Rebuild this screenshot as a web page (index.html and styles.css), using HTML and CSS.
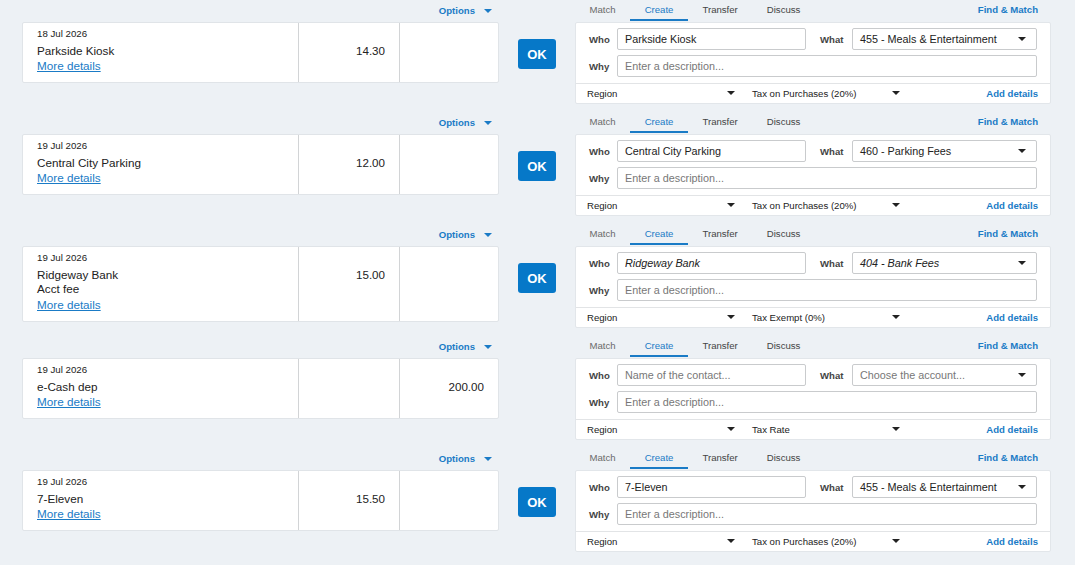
FILE: index.html
```html
<!DOCTYPE html>
<html lang="en">
<head>
    <meta charset="UTF-8">
    <meta name="viewport" content="width=device-width, initial-scale=1.0">
    <title>Bank Reconciliation</title>
    <link rel="stylesheet" href="styles.css">
</head>
<body>
    <div class="list">

        <!-- Line 1 -->
        <div class="line">
            <div class="statement">
                <div class="options">Options <span class="caret blue"></span></div>
                <div class="card">
                    <div class="cell details">
                        <div class="date">18 Jul 2026</div>
                        <div class="payee">Parkside Kiosk</div>
                        <a class="more" href="#">More details</a>
                    </div>
                    <div class="cell amount spent">14.30</div>
                    <div class="cell amount"></div>
                </div>
            </div>
            <div class="ok-col"><button class="ok">OK</button></div>
            <div class="entry">
                <div class="tabs">
                    <span class="tab muted">Match</span>
                    <span class="tab active">Create</span>
                    <span class="tab">Transfer</span>
                    <span class="tab">Discuss</span>
                    <a class="find" href="#">Find &amp; Match</a>
                </div>
                <div class="panel">
                    <div class="fields">
                        <div class="field-row">
                            <label>Who</label>
                            <input class="who" type="text" value="Parkside Kiosk" placeholder="Name of the contact...">
                            <label class="what">What</label>
                            <div class="select">455 - Meals &amp; Entertainment <span class="caret"></span></div>
                        </div>
                        <div class="field-row">
                            <label>Why</label>
                            <input class="why" type="text" placeholder="Enter a description...">
                        </div>
                    </div>
                    <div class="panel-foot">
                        <div class="mini-select">Region <span class="caret"></span></div>
                        <div class="mini-select">Tax on Purchases (20%) <span class="caret"></span></div>
                        <a class="add" href="#">Add details</a>
                    </div>
                </div>
            </div>
        </div>

        <!-- Line 2 -->
        <div class="line">
            <div class="statement">
                <div class="options">Options <span class="caret blue"></span></div>
                <div class="card">
                    <div class="cell details">
                        <div class="date">19 Jul 2026</div>
                        <div class="payee">Central City Parking</div>
                        <a class="more" href="#">More details</a>
                    </div>
                    <div class="cell amount spent">12.00</div>
                    <div class="cell amount"></div>
                </div>
            </div>
            <div class="ok-col"><button class="ok">OK</button></div>
            <div class="entry">
                <div class="tabs">
                    <span class="tab muted">Match</span>
                    <span class="tab active">Create</span>
                    <span class="tab">Transfer</span>
                    <span class="tab">Discuss</span>
                    <a class="find" href="#">Find &amp; Match</a>
                </div>
                <div class="panel">
                    <div class="fields">
                        <div class="field-row">
                            <label>Who</label>
                            <input class="who" type="text" value="Central City Parking" placeholder="Name of the contact...">
                            <label class="what">What</label>
                            <div class="select">460 - Parking Fees <span class="caret"></span></div>
                        </div>
                        <div class="field-row">
                            <label>Why</label>
                            <input class="why" type="text" placeholder="Enter a description...">
                        </div>
                    </div>
                    <div class="panel-foot">
                        <div class="mini-select">Region <span class="caret"></span></div>
                        <div class="mini-select">Tax on Purchases (20%) <span class="caret"></span></div>
                        <a class="add" href="#">Add details</a>
                    </div>
                </div>
            </div>
        </div>

        <!-- Line 3: suggested values shown in italics -->
        <div class="line">
            <div class="statement">
                <div class="options">Options <span class="caret blue"></span></div>
                <div class="card">
                    <div class="cell details">
                        <div class="date">19 Jul 2026</div>
                        <div class="payee">Ridgeway Bank</div>
                        <div class="payee">Acct fee</div>
                        <a class="more" href="#">More details</a>
                    </div>
                    <div class="cell amount spent">15.00</div>
                    <div class="cell amount"></div>
                </div>
            </div>
            <div class="ok-col"><button class="ok">OK</button></div>
            <div class="entry">
                <div class="tabs">
                    <span class="tab muted">Match</span>
                    <span class="tab active">Create</span>
                    <span class="tab">Transfer</span>
                    <span class="tab">Discuss</span>
                    <a class="find" href="#">Find &amp; Match</a>
                </div>
                <div class="panel">
                    <div class="fields">
                        <div class="field-row">
                            <label>Who</label>
                            <input class="who suggested" type="text" value="Ridgeway Bank" placeholder="Name of the contact...">
                            <label class="what">What</label>
                            <div class="select suggested">404 - Bank Fees <span class="caret"></span></div>
                        </div>
                        <div class="field-row">
                            <label>Why</label>
                            <input class="why" type="text" placeholder="Enter a description...">
                        </div>
                    </div>
                    <div class="panel-foot">
                        <div class="mini-select">Region <span class="caret"></span></div>
                        <div class="mini-select">Tax Exempt (0%) <span class="caret"></span></div>
                        <a class="add" href="#">Add details</a>
                    </div>
                </div>
            </div>
        </div>

        <!-- Line 4: nothing coded yet, no OK button -->
        <div class="line">
            <div class="statement">
                <div class="options">Options <span class="caret blue"></span></div>
                <div class="card">
                    <div class="cell details">
                        <div class="date">19 Jul 2026</div>
                        <div class="payee">e-Cash dep</div>
                        <a class="more" href="#">More details</a>
                    </div>
                    <div class="cell amount spent"></div>
                    <div class="cell amount">200.00</div>
                </div>
            </div>
            <div class="ok-col"></div>
            <div class="entry">
                <div class="tabs">
                    <span class="tab muted">Match</span>
                    <span class="tab active">Create</span>
                    <span class="tab">Transfer</span>
                    <span class="tab">Discuss</span>
                    <a class="find" href="#">Find &amp; Match</a>
                </div>
                <div class="panel">
                    <div class="fields">
                        <div class="field-row">
                            <label>Who</label>
                            <input class="who" type="text" placeholder="Name of the contact...">
                            <label class="what">What</label>
                            <div class="select empty">Choose the account... <span class="caret"></span></div>
                        </div>
                        <div class="field-row">
                            <label>Why</label>
                            <input class="why" type="text" placeholder="Enter a description...">
                        </div>
                    </div>
                    <div class="panel-foot">
                        <div class="mini-select">Region <span class="caret"></span></div>
                        <div class="mini-select">Tax Rate <span class="caret"></span></div>
                        <a class="add" href="#">Add details</a>
                    </div>
                </div>
            </div>
        </div>

        <!-- Line 5 -->
        <div class="line">
            <div class="statement">
                <div class="options">Options <span class="caret blue"></span></div>
                <div class="card">
                    <div class="cell details">
                        <div class="date">19 Jul 2026</div>
                        <div class="payee">7-Eleven</div>
                        <a class="more" href="#">More details</a>
                    </div>
                    <div class="cell amount spent">15.50</div>
                    <div class="cell amount"></div>
                </div>
            </div>
            <div class="ok-col"><button class="ok">OK</button></div>
            <div class="entry">
                <div class="tabs">
                    <span class="tab muted">Match</span>
                    <span class="tab active">Create</span>
                    <span class="tab">Transfer</span>
                    <span class="tab">Discuss</span>
                    <a class="find" href="#">Find &amp; Match</a>
                </div>
                <div class="panel">
                    <div class="fields">
                        <div class="field-row">
                            <label>Who</label>
                            <input class="who" type="text" value="7-Eleven" placeholder="Name of the contact...">
                            <label class="what">What</label>
                            <div class="select">455 - Meals &amp; Entertainment <span class="caret"></span></div>
                        </div>
                        <div class="field-row">
                            <label>Why</label>
                            <input class="why" type="text" placeholder="Enter a description...">
                        </div>
                    </div>
                    <div class="panel-foot">
                        <div class="mini-select">Region <span class="caret"></span></div>
                        <div class="mini-select">Tax on Purchases (20%) <span class="caret"></span></div>
                        <a class="add" href="#">Add details</a>
                    </div>
                </div>
            </div>
        </div>

    </div>
</body>
</html>
```

FILE: styles.css
```css
* {
    margin: 0;
    padding: 0;
    box-sizing: border-box;
}

body {
    background-color: #edf1f5;
    color: #222;
    font-family: "Liberation Sans", Arial, sans-serif;
}

a {
    color: #1a7bc6;
}

.list {
    padding: 0 24px 0 22px;
}

.line {
    display: flex;
    align-items: flex-start;
    margin-bottom: 8px;
}

/* statement side */
.statement {
    width: 477px;
}

.options {
    height: 21px;
    margin-bottom: 1px;
    display: flex;
    justify-content: flex-end;
    align-items: center;
    gap: 9px;
    padding-right: 7px;
    font-size: 9.6px;
    font-weight: bold;
    color: #1a7bc6;
}

.card {
    display: flex;
    background: white;
    border: 1px solid #e0e4e8;
    border-radius: 2px;
}

.cell {
    border-right: 1px solid #d2d4d6;
}

.details {
    width: 276px;
    padding: 3px 0 8px 14px;
}

.date {
    font-size: 9.7px;
    line-height: 16px;
    margin-bottom: 1.5px;
}

.payee {
    font-size: 11.7px;
    line-height: 14.5px;
}

.more {
    display: block;
    font-size: 11.7px;
    line-height: 16px;
}

.amount {
    width: 98px;
    padding: 20px 14px 0 0;
    text-align: right;
    font-size: 11.6px;
    line-height: 16px;
    border-right: none;
}

.amount.spent {
    width: 101px;
    border-right: 1px solid #d2d4d6;
}

/* ok button */
.ok-col {
    width: 76px;
    display: flex;
    justify-content: center;
    padding-top: 39px;
}

.ok {
    width: 38px;
    height: 30px;
    background-color: #0678c8;
    color: white;
    border: none;
    border-radius: 3px;
    font-family: inherit;
    font-size: 13px;
    font-weight: bold;
    cursor: pointer;
}

/* transaction side */
.entry {
    width: 476px;
}

.tabs {
    height: 21px;
    margin-bottom: 1px;
    display: flex;
    align-items: flex-start;
    font-size: 9.6px;
}

.tab {
    padding: 0 14.5px;
    line-height: 19px;
    border-bottom: 2px solid transparent;
    color: #444;
}

.tab.muted {
    color: #6a6a6a;
}

.tab.active {
    color: #1a7bc6;
    border-bottom-color: #1a7bc6;
}

.find {
    margin-left: auto;
    padding-right: 13px;
    line-height: 19px;
    font-weight: bold;
    text-decoration: none;
}

.panel {
    height: 82px;
    background: white;
    border: 1px solid #e2e6ea;
    border-radius: 2px;
}

.fields {
    padding: 5px 13px 6px 13px;
    display: flex;
    flex-direction: column;
    gap: 5px;
}

.field-row {
    display: flex;
    align-items: center;
    height: 22px;
}

.field-row label {
    width: 28px;
    font-size: 9.6px;
    font-weight: bold;
    color: #444;
}

.field-row label.what {
    width: 32px;
    margin-left: 14px;
}

input,
.select {
    height: 22px;
    border: 1px solid #c9cbcd;
    border-radius: 2px;
    padding: 0 7px;
    font-family: "Liberation Sans", Arial, sans-serif;
    font-size: 10.8px;
    color: #222;
    background: white;
    outline: none;
}

input::placeholder {
    color: #777;
}

.who {
    width: 189px;
}

.why {
    flex: 1;
}

.select {
    flex: 1;
    display: flex;
    align-items: center;
    justify-content: space-between;
    padding-right: 10px;
}

.suggested {
    font-style: italic;
}

.select.empty {
    color: #777;
}

.caret {
    display: inline-block;
    width: 0;
    height: 0;
    border-left: 4px solid transparent;
    border-right: 4px solid transparent;
    border-top: 4px solid #222;
}

.caret.blue {
    border-top-color: #1a7bc6;
}

.panel-foot {
    height: 19px;
    border-top: 1px solid #e2e4e6;
    display: flex;
    align-items: center;
    padding: 0 12px 0 11px;
    font-size: 9.6px;
}

.mini-select {
    width: 148px;
    display: flex;
    align-items: center;
    justify-content: space-between;
    margin-right: 17px;
}

.add {
    margin-left: auto;
    font-weight: bold;
    text-decoration: none;
}
```
